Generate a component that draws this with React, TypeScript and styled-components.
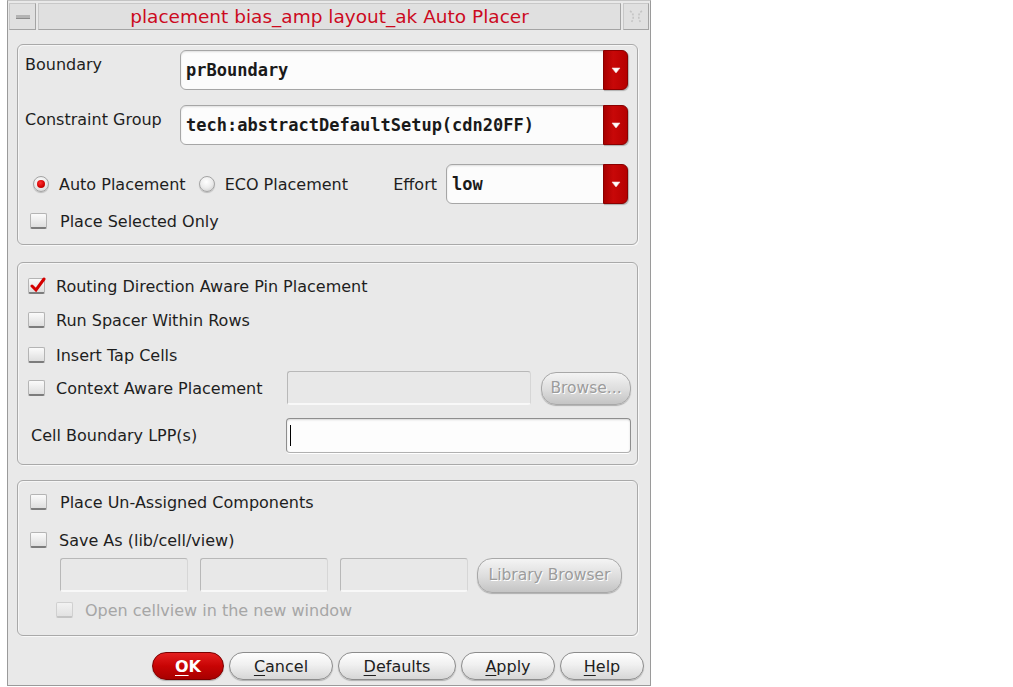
import React from 'react';
import styled, { createGlobalStyle, css } from 'styled-components';

const Global = createGlobalStyle`
  html, body { margin: 0; padding: 0; background: #ffffff; }
  body { font-family: "DejaVu Sans", "Noto Sans", sans-serif; }
  * { box-sizing: border-box; }
`;

const Page = styled.div`
  width: 1013px;
  height: 687px;
  background: #ffffff;
  overflow: hidden;
`;

const Window = styled.div`
  margin-left: 7px;
  width: 644px;
  height: 686px;
  border: 1px solid #9a9a9a;
  border-top-color: #c4c4c4;
  background: #e9e9e9;
  display: flex;
  flex-direction: column;
`;

const TitleBar = styled.div`
  display: flex;
  gap: 2px;
  padding: 2px 1px 0 1px;
  height: 29px;
`;

const TitleBox = styled.div<{ $w?: number }>`
  ${(p) => (p.$w ? css`width: ${p.$w}px; flex: none;` : css`flex: 1;`)}
  height: 27px;
  border: 1px solid #c8c8c8;
  border-right-color: #a4a4a4;
  border-bottom-color: #a4a4a4;
  background: #e0e0e0;
  display: flex;
  align-items: center;
  justify-content: center;
`;

const TitleText = styled.span`
  color: #cc0a1e;
  font-size: 18.5px;
  white-space: nowrap;
`;

const MinBar = styled.span`
  width: 14px;
  height: 4px;
  background: #b4b4b4;
  border-bottom: 1px solid #8c8c8c;
  margin-top: 1px;
`;

const Body = styled.div`
  display: flex;
  flex-direction: column;
  padding: 14px 6px 0 9px;
`;

const Group = styled.div<{ $h: number; $mt: number; $pl: number; $pr: number; $pt: number }>`
  height: ${(p) => p.$h}px;
  margin-top: ${(p) => p.$mt}px;
  margin-right: 6px;
  padding: ${(p) => p.$pt}px ${(p) => p.$pr}px 0 ${(p) => p.$pl}px;
  border: 1px solid #a9a9a9;
  border-radius: 6px;
  box-shadow: inset 1px 1px 0 #f6f6f6, 1px 1px 0 #f8f8f8;
  display: flex;
  flex-direction: column;
`;

const FieldRow = styled.div<{ $mt?: number; $cols: string; $h: number; $gap?: number }>`
  display: grid;
  grid-template-columns: ${(p) => p.$cols};
  column-gap: ${(p) => p.$gap ?? 0}px;
  height: ${(p) => p.$h}px;
  margin-top: ${(p) => p.$mt ?? 0}px;
  align-items: center;
`;

const Label = styled.span<{ $top?: boolean; $ml?: number; $disabled?: boolean }>`
  font-size: 16px;
  color: ${(p) => (p.$disabled ? '#a6a6a6' : '#1e1e1e')};
  white-space: nowrap;
  margin-left: ${(p) => p.$ml ?? 0}px;
  ${(p) => p.$top && css`align-self: start; padding-top: 5px;`}
`;

const ComboBox = styled.div<{ $w?: number }>`
  height: 40px;
  ${(p) => p.$w && css`width: ${p.$w}px; flex: none;`}
  display: flex;
  border: 1px solid #a6a6a6;
  border-radius: 6px;
  background: #fcfcfc;
  box-shadow: inset 0 1px 2px rgba(0, 0, 0, 0.12);
`;

const ComboText = styled.span`
  flex: 1;
  display: flex;
  align-items: center;
  padding-left: 5px;
  font-family: "DejaVu Sans Mono", "Liberation Mono", monospace;
  font-weight: bold;
  font-size: 17px;
  color: #1a1a1a;
  white-space: nowrap;
  overflow: hidden;
`;

const ComboArrow = styled.span`
  width: 25px;
  margin: -1px -1px -1px 0;
  border-radius: 0 6px 6px 0;
  background: linear-gradient(90deg, #a80000 0%, #c80808 40%, #b60000 100%);
  border: 1px solid #8a0000;
  box-shadow: 1px 1px 1px rgba(0, 0, 0, 0.25);
  display: flex;
  align-items: center;
  justify-content: center;
`;

const Arrow = () => (
  <svg width="10" height="7" viewBox="0 0 10 7">
    <path d="M1 1 L9 1 L5 6 Z" fill="#ffffff" stroke="#f0d0d0" strokeWidth="0.6" />
  </svg>
);

const Combo = ({ text, w }: { text: string; w?: number }) => (
  <ComboBox $w={w}>
    <ComboText>{text}</ComboText>
    <ComboArrow>
      <Arrow />
    </ComboArrow>
  </ComboBox>
);

const FlexRow = styled.div<{ $h: number; $mt?: number; $ml?: number; $gap?: number }>`
  display: flex;
  align-items: center;
  height: ${(p) => p.$h}px;
  margin-top: ${(p) => p.$mt ?? 0}px;
  margin-left: ${(p) => p.$ml ?? 0}px;
  gap: ${(p) => p.$gap ?? 0}px;
`;

const RadioCircle = styled.span<{ $on?: boolean }>`
  width: 16px;
  height: 16px;
  flex: none;
  border-radius: 50%;
  border: 1px solid #a4a4a4;
  background: radial-gradient(circle at 45% 35%, #ffffff 0%, #ececec 50%, #c8c8c8 100%);
  box-shadow: 0 1px 1px rgba(0, 0, 0, 0.2);
  display: flex;
  align-items: center;
  justify-content: center;
  &::after {
    content: '';
    display: ${(p) => (p.$on ? 'block' : 'none')};
    width: 8px;
    height: 8px;
    border-radius: 50%;
    background: radial-gradient(circle at 40% 35%, #ff3030, #d00000 60%, #a00000);
  }
`;

const RadioItem = styled.span<{ $ml: number }>`
  display: flex;
  align-items: center;
  gap: 10px;
  margin-left: ${(p) => p.$ml}px;
`;

const Box = styled.span<{ $disabled?: boolean }>`
  position: relative;
  width: 17px;
  height: 16px;
  flex: none;
  border: 1px solid ${(p) => (p.$disabled ? '#d0d0d0' : '#b4b4b4')};
  border-bottom: 2px solid ${(p) => (p.$disabled ? '#c4c4c4' : '#7c7c7c')};
  border-radius: 2px;
  background: ${(p) =>
    p.$disabled ? 'linear-gradient(#f2f2f2, #e2e2e2)' : 'linear-gradient(#fbfbfb, #dedede)'};
`;

const CheckMark = styled.svg`
  position: absolute;
  left: 1px;
  top: -2px;
`;

const CheckItem = styled.span<{ $ml: number; $gap: number }>`
  display: flex;
  align-items: center;
  gap: ${(p) => p.$gap}px;
  margin-left: ${(p) => p.$ml}px;
`;

const Check = ({
  label,
  checked,
  disabled,
  ml,
  gap,
}: {
  label: string;
  checked?: boolean;
  disabled?: boolean;
  ml: number;
  gap: number;
}) => (
  <CheckItem $ml={ml} $gap={gap}>
    <Box $disabled={disabled}>
      {checked && (
        <CheckMark width="16" height="16" viewBox="0 0 16 16">
          <path d="M2 9 L6 13 L14 2" fill="none" stroke="#d40000" strokeWidth="3" strokeLinecap="round" />
        </CheckMark>
      )}
    </Box>
    <Label $disabled={disabled}>{label}</Label>
  </CheckItem>
);

const EffortWrap = styled.span`
  margin-left: auto;
  display: flex;
  align-items: center;
  gap: 9px;
`;

const SunkenEntry = styled.span<{ $w?: number }>`
  height: 34px;
  ${(p) => p.$w && css`width: ${p.$w}px;`}
  border: 1px solid #b8b8b8;
  border-right-color: #d6d6d6;
  border-bottom: 2px solid #f8f8f8;
  border-radius: 3px;
  background: #e8e8e8;
`;

const Entry = styled.span`
  height: 35px;
  border: 1px solid #8e8e8e;
  border-bottom-color: #b0b0b0;
  border-radius: 4px;
  background: #fdfdfd;
  box-shadow: inset 0 1px 2px rgba(0, 0, 0, 0.15), 0 1px 0 #ffffff;
  display: flex;
  align-items: center;
  padding-left: 3px;
`;

const Caret = styled.span`
  width: 1px;
  height: 21px;
  background: #000000;
`;

const PillButton = styled.button<{ $w: number; $primary?: boolean; $disabled?: boolean; $h?: number; $ml?: number }>`
  width: ${(p) => p.$w}px;
  height: ${(p) => p.$h ?? 28}px;
  margin-left: ${(p) => p.$ml ?? 0}px;
  flex: none;
  padding: 0;
  border-radius: 15px;
  font-family: "DejaVu Sans", sans-serif;
  font-size: 16px;
  cursor: default;
  border: 1px solid #8c8c8c;
  background: linear-gradient(#fefefe 0%, #f0f0f0 45%, #d6d6d6 100%);
  color: #1e1e1e;
  box-shadow: 0 1px 1px rgba(0, 0, 0, 0.25);
  ${(p) =>
    p.$primary &&
    css`
      border-color: #7a0000;
      background: linear-gradient(#e42020 0%, #c80404 50%, #a80000 100%);
      color: #ffffff;
      font-weight: bold;
    `}
  ${(p) =>
    p.$disabled &&
    css`
      border-color: #a8a8a8;
      background: linear-gradient(#f4f4f4 0%, #dcdcdc 55%, #c4c4c4 100%);
      color: #9c9c9c;
      text-shadow: 1px 1px 0 #ffffff;
      font-size: 15.5px;
    `}
  u {
    text-decoration-thickness: 1px;
    text-underline-offset: 3px;
  }
`;

const ButtonBar = styled.div`
  display: flex;
  justify-content: flex-end;
  gap: 5px;
  margin-top: 16px;
`;

export default function App() {
  return (
    <Page>
      <Global />
      <Window>
        <TitleBar>
          <TitleBox $w={27}>
            <MinBar />
          </TitleBox>
          <TitleBox>
            <TitleText>placement bias_amp layout_ak Auto Placer</TitleText>
          </TitleBox>
          <TitleBox $w={26}>
            <svg width="18" height="18" viewBox="0 0 18 18">
              <path
                d="M3 3 Q9 7 4 15 M15 3 Q9 7 14 15"
                fill="none"
                stroke="#c4c4c4"
                strokeWidth="1.6"
                strokeDasharray="2 1.5"
              />
            </svg>
          </TitleBox>
        </TitleBar>
        <Body>
          <Group $h={201} $mt={0} $pl={7} $pr={9} $pt={5}>
            <FieldRow $cols="155px 1fr" $h={40}>
              <Label $top>Boundary</Label>
              <Combo text="prBoundary" />
            </FieldRow>
            <FieldRow $cols="155px 1fr" $h={40} $mt={15}>
              <Label $top>Constraint Group</Label>
              <Combo text="tech:abstractDefaultSetup(cdn20FF)" />
            </FieldRow>
            <FlexRow $h={40} $mt={19}>
              <RadioItem $ml={8}>
                <RadioCircle $on />
                <Label>Auto Placement</Label>
              </RadioItem>
              <RadioItem $ml={13}>
                <RadioCircle />
                <Label>ECO Placement</Label>
              </RadioItem>
              <EffortWrap>
                <Label>Effort</Label>
                <Combo text="low" w={182} />
              </EffortWrap>
            </FlexRow>
            <FlexRow $h={20} $mt={7}>
              <Check label="Place Selected Only" ml={5} gap={13} />
            </FlexRow>
          </Group>

          <Group $h={203} $mt={17} $pl={10} $pr={6} $pt={11}>
            <FlexRow $h={24}>
              <Check label="Routing Direction Aware Pin Placement" checked ml={0} gap={11} />
            </FlexRow>
            <FlexRow $h={24} $mt={10}>
              <Check label="Run Spacer Within Rows" ml={0} gap={11} />
            </FlexRow>
            <FlexRow $h={24} $mt={11}>
              <Check label="Insert Tap Cells" ml={0} gap={11} />
            </FlexRow>
            <FieldRow $cols="1fr 244px 90px" $gap={10} $h={34} $mt={4}>
              <Check label="Context Aware Placement" ml={0} gap={11} />
              <SunkenEntry />
              <PillButton $w={90} $h={33} $disabled>
                Browse...
              </PillButton>
            </FieldRow>
            <FieldRow $cols="1fr 345px" $h={35} $mt={13}>
              <Label $ml={3}>Cell Boundary LPP(s)</Label>
              <Entry>
                <Caret />
              </Entry>
            </FieldRow>
          </Group>

          <Group $h={156} $mt={15} $pl={12} $pr={14} $pt={9}>
            <FlexRow $h={24}>
              <Check label="Place Un-Assigned Components" ml={0} gap={13} />
            </FlexRow>
            <FlexRow $h={24} $mt={14}>
              <Check label="Save As (lib/cell/view)" ml={0} gap={12} />
            </FlexRow>
            <FlexRow $h={36} $mt={5} $ml={30} $gap={12}>
              <SunkenEntry $w={128} />
              <SunkenEntry $w={128} />
              <SunkenEntry $w={128} />
              <PillButton $w={145} $h={35} $disabled $ml={-3}>
                Library Browser
              </PillButton>
            </FlexRow>
            <FlexRow $h={20} $mt={7}>
              <Check label="Open cellview in the new window" disabled ml={26} gap={12} />
            </FlexRow>
          </Group>

          <ButtonBar>
            <PillButton $w={72} $primary>
              <u>O</u>K
            </PillButton>
            <PillButton $w={104}>
              <u>C</u>ancel
            </PillButton>
            <PillButton $w={118}>
              <u>D</u>efaults
            </PillButton>
            <PillButton $w={94}>
              <u>A</u>pply
            </PillButton>
            <PillButton $w={84}>
              <u>H</u>elp
            </PillButton>
          </ButtonBar>
        </Body>
      </Window>
    </Page>
  );
}
